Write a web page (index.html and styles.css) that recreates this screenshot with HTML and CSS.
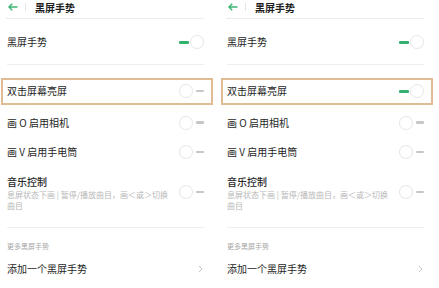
FILE: index.html
```html
<!DOCTYPE html>
<html lang="zh">
<head>
<meta charset="utf-8">
<link rel="stylesheet" href="styles.css">
</head>
<body>
<div class="screens">
  <section class="panel">
    <header class="topbar">
      <svg class="back" width="10" height="8" viewBox="0 0 10 8"><path d="M9.5 4H1.2M4.2 0.8L1 4l3.2 3.2" fill="none" stroke="#3bb574" stroke-width="1.4"/></svg>
      <span class="sep"></span>
      <span class="title">黑屏手势</span>
    </header>
    <div class="row row-main"><span class="label">黑屏手势</span><span class="toggle on"><i class="bar"></i><i class="knob"></i></span></div>
    <div class="row row-hl"><span class="label">双击屏幕亮屏</span><span class="toggle"><i class="knob"></i><i class="bar"></i></span></div>
    <div class="row"><span class="label">画 O 启用相机</span><span class="toggle"><i class="knob"></i><i class="bar"></i></span></div>
    <div class="row"><span class="label">画 V 启用手电筒</span><span class="toggle"><i class="knob"></i><i class="bar"></i></span></div>
    <div class="row row-music">
      <div class="texts"><span class="label strong">音乐控制</span><span class="sub">息屏状态下画 | 暂停/播放曲目，画＜或＞切换曲目</span></div>
      <span class="toggle"><i class="knob"></i><i class="bar"></i></span>
    </div>
    <div class="section">更多黑屏手势</div>
    <div class="row row-add"><span class="label">添加一个黑屏手势</span><svg class="chev" width="5" height="8" viewBox="0 0 5 8"><path d="M0.8 0.8L4 4 0.8 7.2" fill="none" stroke="#c4c4c4" stroke-width="1"/></svg></div>
  </section>
  <section class="panel">
    <header class="topbar">
      <svg class="back" width="10" height="8" viewBox="0 0 10 8"><path d="M9.5 4H1.2M4.2 0.8L1 4l3.2 3.2" fill="none" stroke="#3bb574" stroke-width="1.4"/></svg>
      <span class="sep"></span>
      <span class="title">黑屏手势</span>
    </header>
    <div class="row row-main"><span class="label">黑屏手势</span><span class="toggle on"><i class="bar"></i><i class="knob"></i></span></div>
    <div class="row row-hl"><span class="label">双击屏幕亮屏</span><span class="toggle on"><i class="bar"></i><i class="knob"></i></span></div>
    <div class="row"><span class="label">画 O 启用相机</span><span class="toggle"><i class="knob"></i><i class="bar"></i></span></div>
    <div class="row"><span class="label">画 V 启用手电筒</span><span class="toggle"><i class="knob"></i><i class="bar"></i></span></div>
    <div class="row row-music">
      <div class="texts"><span class="label strong">音乐控制</span><span class="sub">息屏状态下画 | 暂停/播放曲目，画＜或＞切换曲目</span></div>
      <span class="toggle"><i class="knob"></i><i class="bar"></i></span>
    </div>
    <div class="section">更多黑屏手势</div>
    <div class="row row-add"><span class="label">添加一个黑屏手势</span><svg class="chev" width="5" height="8" viewBox="0 0 5 8"><path d="M0.8 0.8L4 4 0.8 7.2" fill="none" stroke="#c4c4c4" stroke-width="1"/></svg></div>
  </section>
</div>
</body>
</html>
```
FILE: styles.css
```css
html, body {
  margin: 0;
  padding: 0;
  background: #fff;
  overflow: hidden;
}
body {
  font-family: "Noto Sans CJK SC", "Noto Sans", sans-serif;
  color: #2a2a2a;
}
.screens {
  display: flex;
  width: 439px;
  height: 288px;
}
.panel {
  width: 220px;
  flex: none;
  padding: 0 16px 0 7px;
  box-sizing: border-box;
  display: flex;
  flex-direction: column;
}
.topbar {
  height: 20px;
  display: flex;
  align-items: center;
  padding: 1px 0 5px;
  box-sizing: border-box;
  border-bottom: 1px solid #ececec;
  margin: 0 0 0 -1px;
}
.back {
  margin-left: 2px;
  display: block;
}
.sep {
  width: 1px;
  height: 8px;
  background: #e4e4e4;
  margin: 0 9px 0 7px;
}
.title {
  font-size: 10px;
  font-weight: 700;
  color: #1e1e1e;
  line-height: 11px;
}
.row {
  display: flex;
  align-items: center;
  justify-content: space-between;
  height: 32px;
  box-sizing: border-box;
}
.label {
  font-size: 10px;
  line-height: 14px;
  color: #262626;
}
.row-main {
  height: 49px;
  padding-top: 2px;
  border-bottom: 1px solid #efefef;
}
.row-hl {
  height: 29px;
  margin: 13px -9px 3px -6px;
  padding: 0 7px 0 4px;
  border: 2px solid #e0bb94;
}
.toggle {
  width: 25px;
  height: 14px;
  display: flex;
  align-items: center;
  justify-content: space-between;
}
.toggle i {
  display: block;
  flex: none;
}
.knob {
  width: 14px;
  height: 14px;
  border-radius: 50%;
  border: 1px solid #e9e9e9;
  box-sizing: border-box;
  background: #fff;
  box-shadow: 0 0 1px rgba(0, 0, 0, 0.05);
}
.toggle .bar {
  width: 8px;
  height: 2.5px;
  background: #c6c6c6;
  border-radius: 1px;
}
.toggle.on .bar {
  width: 10px;
  height: 3px;
  background: #33b26d;
}
.row-music {
  height: auto;
  align-items: flex-start;
  padding: 8px 0 16px;
  border-bottom: 1px solid #efefef;
}
.row-music .toggle {
  margin-top: 10px;
}
.texts {
  display: flex;
  flex-direction: column;
  width: 168px;
}
.strong {
  font-weight: 500;
}
.sub {
  font-size: 8px;
  line-height: 11px;
  color: #b8b8b8;
}
.section {
  font-size: 7px;
  line-height: 10px;
  color: #a8a8a8;
  padding-top: 13px;
}
.row-add {
  height: 40px;
}
.chev {
  display: block;
  margin-right: 1px;
}
```
